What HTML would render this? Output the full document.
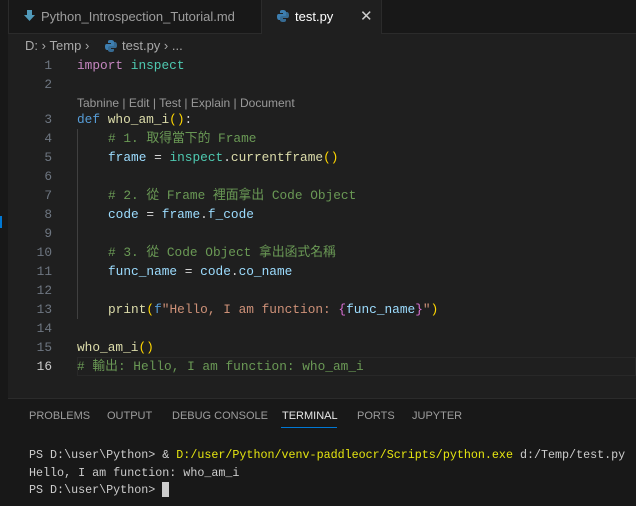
<!DOCTYPE html>
<html><head><meta charset="utf-8"><style>
*{margin:0;padding:0;box-sizing:border-box}
body{width:636px;height:506px;background:#1f1f1f;position:relative;overflow:hidden;font-family:"Liberation Sans","Noto Sans CJK TC",sans-serif;color:#ccc}
.abs{position:absolute;white-space:pre}
.mono{font-family:"Liberation Mono","Noto Sans CJK TC",monospace;font-size:12.8px;line-height:15px}
.ln{position:absolute;left:20px;width:32px;text-align:right;font-family:"Liberation Mono",monospace;font-size:12.8px;line-height:15px;color:#6e7681}
.k{color:#c586c0}.kd{color:#569cd6}.m{color:#4ec9b0}.f{color:#dcdcaa}.v{color:#9cdcfe}.c{color:#6a9955}.s{color:#ce9178}.y{color:#ffd700}.p{color:#da70d6}.w{color:#d4d4d4}
</style></head><body>
<div class="abs" style="left:0;top:0;width:636px;height:33px;background:#181818"></div>
<div class="abs" style="left:0;top:0;width:8px;height:506px;background:#181818"></div>
<div class="abs" style="left:8px;top:0;width:1px;height:33px;background:#2b2b2b"></div>
<div class="abs" style="left:261px;top:0;width:121px;height:34px;background:#1f1f1f;border-left:1px solid #2b2b2b;border-right:1px solid #2b2b2b"></div>
<div class="abs" style="left:8px;top:33px;width:253px;height:1px;background:#2b2b2b"></div>
<div class="abs" style="left:382px;top:33px;width:254px;height:1px;background:#2b2b2b"></div>
<svg class="abs" style="left:24px;top:10px" width="11" height="12" viewBox="0 0 11 12"><path d="M3 0h5v5h3l-5.5 6L0 5h3z" fill="#519aba"/></svg>
<div class="abs" style="left:41px;top:9px;font-size:13px;color:#9d9d9d">Python_Introspection_Tutorial.md</div>
<svg class="abs" style="left:277px;top:10px" width="12" height="12" viewBox="0 0 12 12"><path d="M6 0C3 0 3 1 3 2v1h3v1H1.5C0 4 0 6 0 7s.5 3 2 3h1V8c0-1 1-2 2-2h3c1 0 1-1 1-1.5V2C9 .5 7.5 0 6 0z" fill="#3d7eb0"/><path d="M6 12c3 0 3-1 3-2V9H6V8h4.5c1.5 0 1.5-2 1.5-3s-.5-3-2-3H9v2c0 1-1 2-2 2H4c-1 0-1 1-1 1.5V10c0 1.5 1.5 2 3 2z" fill="#3d7eb0" opacity=".8"/></svg>
<div class="abs" style="left:295px;top:9px;font-size:13px;color:#fff">test.py</div>
<div class="abs" style="left:360px;top:7px;font-size:15px;color:#ccc">✕</div>
<div class="abs" style="left:25px;top:38px;font-size:13px;color:#a9a9a9">D: ›&nbsp;Temp ›</div>
<svg class="abs" style="left:105px;top:40px" width="12" height="12" viewBox="0 0 12 12"><path d="M6 0C3 0 3 1 3 2v1h3v1H1.5C0 4 0 6 0 7s.5 3 2 3h1V8c0-1 1-2 2-2h3c1 0 1-1 1-1.5V2C9 .5 7.5 0 6 0z" fill="#3d7eb0"/><path d="M6 12c3 0 3-1 3-2V9H6V8h4.5c1.5 0 1.5-2 1.5-3s-.5-3-2-3H9v2c0 1-1 2-2 2H4c-1 0-1 1-1 1.5V10c0 1.5 1.5 2 3 2z" fill="#3d7eb0" opacity=".8"/></svg>
<div class="abs" style="left:122px;top:38px;font-size:13px;color:#a9a9a9">test.py › ...</div>

<div class="abs" style="left:77px;top:357px;width:559px;height:19px;border:1px solid #282828"></div>
<div class="abs" style="left:77px;top:129px;width:1px;height:190px;background:#404040"></div>
<div class="abs" style="left:0;top:216px;width:2px;height:12px;background:#0078d4"></div>

<div class="ln" style="top:58px">1</div>
<div class="ln" style="top:77px">2</div>
<div class="ln" style="top:112px">3</div>
<div class="ln" style="top:131px">4</div>
<div class="ln" style="top:150px">5</div>
<div class="ln" style="top:169px">6</div>
<div class="ln" style="top:188px">7</div>
<div class="ln" style="top:207px">8</div>
<div class="ln" style="top:226px">9</div>
<div class="ln" style="top:245px">10</div>
<div class="ln" style="top:264px">11</div>
<div class="ln" style="top:283px">12</div>
<div class="ln" style="top:302px">13</div>
<div class="ln" style="top:321px">14</div>
<div class="ln" style="top:340px">15</div>
<div class="ln" style="top:359px;color:#ccc">16</div>

<div class="abs mono" style="left:77px;top:58px"><span class="k">import</span> <span class="m">inspect</span></div>
<div class="abs" style="left:77px;top:96px;font-size:12px;color:#999">Tabnine | Edit | Test | Explain | Document</div>
<div class="abs mono" style="left:77px;top:112px"><span class="kd">def</span> <span class="f">who_am_i</span><span class="y">()</span><span class="w">:</span></div>
<div class="abs mono c" style="left:108px;top:131px"># 1. 取得當下的 Frame</div>
<div class="abs mono" style="left:108px;top:150px"><span class="v">frame</span><span class="w"> = </span><span class="m">inspect</span><span class="w">.</span><span class="f">currentframe</span><span class="y">()</span></div>
<div class="abs mono c" style="left:108px;top:188px"># 2. 從 Frame 裡面拿出 Code Object</div>
<div class="abs mono" style="left:108px;top:207px"><span class="v">code</span><span class="w"> = </span><span class="v">frame</span><span class="w">.</span><span class="v">f_code</span></div>
<div class="abs mono c" style="left:108px;top:245px"># 3. 從 Code Object 拿出函式名稱</div>
<div class="abs mono" style="left:108px;top:264px"><span class="v">func_name</span><span class="w"> = </span><span class="v">code</span><span class="w">.</span><span class="v">co_name</span></div>
<div class="abs mono" style="left:108px;top:302px"><span class="f">print</span><span class="y">(</span><span class="kd">f</span><span class="s">"Hello, I am function: </span><span class="p">{</span><span class="v">func_name</span><span class="p">}</span><span class="s">"</span><span class="y">)</span></div>
<div class="abs mono" style="left:77px;top:340px"><span class="f">who_am_i</span><span class="y">()</span></div>
<div class="abs mono c" style="left:77px;top:359px"># 輸出: Hello, I am function: who_am_i</div>

<div class="abs" style="left:8px;top:398px;width:628px;height:1px;background:#2b2b2b"></div>
<div class="abs" style="left:0;top:399px;width:636px;height:107px;background:#181818"></div>
<div class="abs" style="left:29px;top:410px;font-size:11px;color:#9d9d9d">PROBLEMS</div>
<div class="abs" style="left:107px;top:410px;font-size:11px;color:#9d9d9d">OUTPUT</div>
<div class="abs" style="left:172px;top:410px;font-size:11px;color:#9d9d9d">DEBUG CONSOLE</div>
<div class="abs" style="left:282px;top:410px;font-size:11px;color:#e7e7e7">TERMINAL</div>
<div class="abs" style="left:281px;top:427px;width:56px;height:1px;background:#0078d4"></div>
<div class="abs" style="left:357px;top:410px;font-size:11px;color:#9d9d9d">PORTS</div>
<div class="abs" style="left:412px;top:410px;font-size:11px;color:#9d9d9d">JUPYTER</div>
<div class="abs" style="left:29px;top:447px;font-family:'Liberation Mono',monospace;font-size:11.7px;color:#ccc;line-height:17.5px">PS D:\user\Python&gt; &amp; <span style="color:#e5e510">D:/user/Python/venv-paddleocr/Scripts/python.exe</span> d:/Temp/test.py
Hello, I am function: who_am_i
PS D:\user\Python&gt; </div>
<div class="abs" style="left:162px;top:482px;width:7px;height:15px;background:#ccc"></div>
</body></html>
